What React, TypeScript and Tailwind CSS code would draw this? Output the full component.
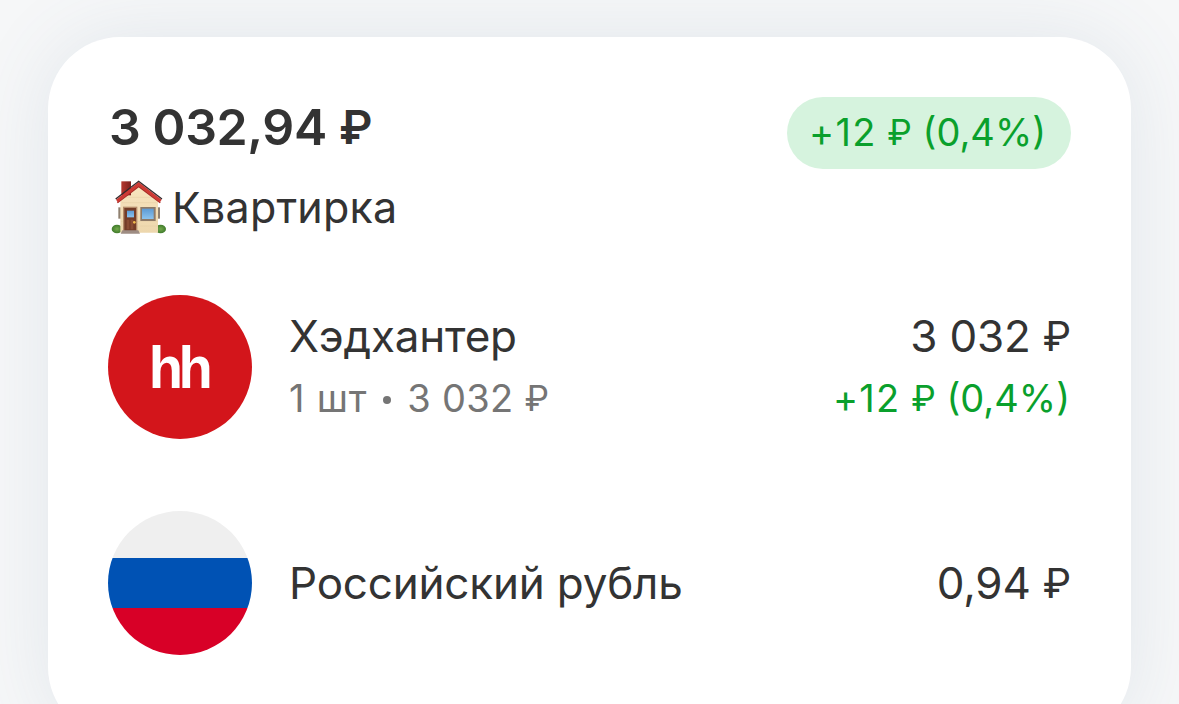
import type { ReactNode } from "react";

interface Position {
  id: string;
  name: string;
  icon: ReactNode;
  details?: ReactNode;
  value: ReactNode;
  change?: ReactNode;
}

// The currency sign sits slightly smaller than the digits
function Rub() {
  return <span className="relative top-[-1px] text-[0.92em] leading-none">₽</span>;
}

function Change() {
  return (
    <>
      <span className="tracking-[1.3px]">+12</span> <Rub /> (0,4%)
    </>
  );
}

function HouseIcon() {
  return (
    <svg viewBox="18 24 168 168" className="h-14 w-14 shrink-0" aria-hidden>
      <defs>
        <linearGradient id="house-wall" x1="0" y1="0" x2="0" y2="1">
          <stop offset="0%" stopColor="#F8E5C0" />
          <stop offset="100%" stopColor="#EDD7AD" />
        </linearGradient>
        <linearGradient id="house-chimney" x1="0" y1="0" x2="1" y2="0">
          <stop offset="0%" stopColor="#B5382F" />
          <stop offset="100%" stopColor="#7C211D" />
        </linearGradient>
        <linearGradient id="house-glass" x1="0" y1="0" x2="0" y2="1">
          <stop offset="0%" stopColor="#5C9AD4" />
          <stop offset="100%" stopColor="#8CC3EE" />
        </linearGradient>
        <radialGradient id="house-bush">
          <stop offset="0%" stopColor="#73A94B" />
          <stop offset="100%" stopColor="#3F7A2B" />
        </radialGradient>
      </defs>
      <ellipse cx="36" cy="171" rx="16" ry="13" fill="url(#house-bush)" />
      <ellipse cx="167" cy="171" rx="16" ry="13" fill="url(#house-bush)" />
      <rect x="40" y="106" width="8" height="34" fill="#8F8070" />
      <rect x="158" y="106" width="7" height="34" fill="#8F8070" />
      <path d="M46 78 101 34 159 78V182H46Z" fill="url(#house-wall)" />
      <path d="M62 76H142M50 92H155M48 148H158M106 162H158" stroke="#E3CDA2" strokeWidth="1.5" />
      <rect x="49" y="28" width="29" height="42" fill="url(#house-chimney)" />
      <path d="M37 92 101 43 166 92" fill="none" stroke="#A52B26" strokeWidth="5" />
      <path d="M36 87 101 36 167 87" fill="none" stroke="#CE3A34" strokeWidth="10" />
      <path d="M32 81 101 28 171 81" fill="none" stroke="#35282B" strokeWidth="4" />
      <rect x="54" y="104" width="43" height="76" fill="#B58B69" />
      <rect x="58" y="108" width="35" height="70" fill="#743D28" />
      <rect x="66" y="116" width="21" height="20" fill="url(#house-glass)" />
      <rect x="65" y="143" width="8" height="29" fill="#8A4D34" />
      <rect x="77" y="143" width="8" height="29" fill="#8A4D34" />
      <circle cx="88" cy="151" r="4" fill="#F0BB4D" />
      <rect x="106" y="105" width="46" height="42" fill="#8D7A68" />
      <rect x="111" y="110" width="35" height="31" fill="url(#house-glass)" />
      <path d="M52 175H100L105 185H47Z" fill="#9E8D83" />
    </svg>
  );
}

function HhIcon() {
  return (
    <div className="flex h-36 w-36 shrink-0 items-center justify-center rounded-full bg-[#d3151b]">
      <span className="scale-x-95 pt-[2px] pr-[3px] font-['Liberation_Sans'] text-[59px] leading-[60px] font-bold tracking-[-4.5px] text-white">
        hh
      </span>
    </div>
  );
}

function RussiaIcon() {
  return (
    <div className="flex h-36 w-36 shrink-0 flex-col overflow-hidden rounded-full">
      <div className="h-[47px] bg-[#efefef]" />
      <div className="h-[50px] bg-[#0052b4]" />
      <div className="h-[47px] bg-[#d80027]" />
    </div>
  );
}

const POSITIONS: Position[] = [
  {
    id: "hh",
    name: "Хэдхантер",
    icon: <HhIcon />,
    details: (
      <>
        <span className="tracking-[0.8px]">1 шт</span>
        <span className="mx-4 inline-block h-2 w-2 -translate-y-2 rounded-full bg-[#757575]" />3
        032 <Rub />
      </>
    ),
    value: (
      <>
        3 032 <Rub />
      </>
    ),
    change: <Change />,
  },
  {
    id: "rub",
    name: "Российский рубль",
    icon: <RussiaIcon />,
    value: (
      <>
        0,94 <Rub />
      </>
    ),
  },
];

function PositionRow({ position }: { position: Position }) {
  return (
    <div className="flex h-36 items-center">
      {position.icon}
      <div className={`ml-[37px] flex flex-1 items-center justify-between ${position.details ? "pb-1" : "pb-0"}`}>
        <div className="flex flex-col gap-[10px]">
          <p className="text-[44px] leading-[56px] tracking-[-0.2px]">{position.name}</p>
          {position.details && (
            <p className="h-12 text-[38px] leading-[48px] tracking-[0.3px] text-[#757575]">{position.details}</p>
          )}
        </div>
        <div className="flex flex-col gap-[10px] text-right">
          <p className="h-14 text-[44px] leading-[56px] tracking-[-0.2px]">{position.value}</p>
          {position.change && (
            <p className="h-12 pr-px text-[38px] leading-[48px] text-[#0aa02c]">{position.change}</p>
          )}
        </div>
      </div>
    </div>
  );
}

export default function App() {
  return (
    <div className="h-[704px] w-[1179px] overflow-hidden bg-[#f6f7f8] px-12 pt-[37px] font-[Inter,sans-serif] whitespace-nowrap text-[#333333]">
      <div className="h-[702px] w-[1083px] rounded-[72px] bg-white p-[60px] shadow-[0_0_80px_rgba(80,115,150,0.12)]">
        <div className="flex items-start justify-between">
          <div>
            <p className="h-[60px] pl-px text-[50px] leading-[60px] font-semibold tracking-[-0.4px]">
              3 032,94 <Rub />
            </p>
            <div className="mt-[22px] flex h-14 items-center">
              <div className="mt-[2px] ml-[3px] h-14">
                <HouseIcon />
              </div>
              <span className="ml-[5px] text-[43px] leading-[56px] tracking-[0.2px]">Квартирка</span>
            </div>
          </div>
          <div className="flex h-[72px] w-[284px] items-center justify-center rounded-full bg-[#d6f3de] pr-[3px] pb-[2px] text-[38px] leading-[48px] text-[#0aa02c]">
            <span>
              <Change />
            </span>
          </div>
        </div>

        <div className="mt-[60px] flex flex-col gap-[72px]">
          {POSITIONS.map((position) => (
            <PositionRow key={position.id} position={position} />
          ))}
        </div>
      </div>
    </div>
  );
}
